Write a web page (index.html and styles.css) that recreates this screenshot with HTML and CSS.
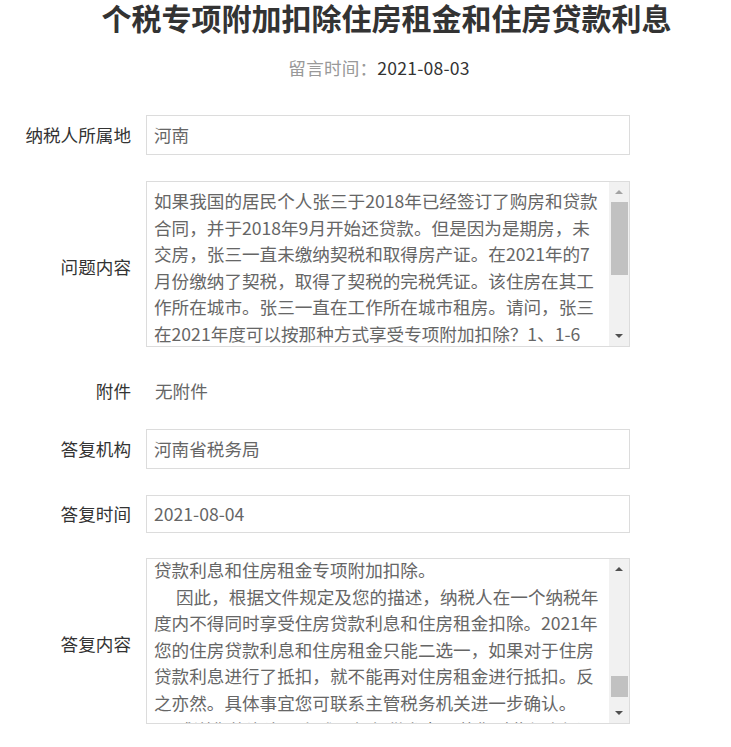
FILE: index.html
```html
<!DOCTYPE html>
<html lang="zh-CN">
<head>
<meta charset="utf-8">
<title>个税专项附加扣除住房租金和住房贷款利息</title>
<link rel="stylesheet" href="styles.css">
</head>
<body>
<div class="page">
  <h1 class="title">个税专项附加扣除住房租金和住房贷款利息</h1>
  <p class="meta"><span class="meta-label">留言时间：</span><span class="meta-value">2021-08-03</span></p>

  <div class="form">
    <div class="row">
      <div class="label">纳税人所属地</div>
      <div class="field input">河南</div>
    </div>

    <div class="row row-area">
      <div class="label label-area">问题内容</div>
      <div class="field area">
        <div class="area-text">如果我国的居民个人张三于2018年已经签订了购房和贷款<br>合同，并于2018年9月开始还贷款。但是因为是期房，未<br>交房，张三一直未缴纳契税和取得房产证。在2021年的7<br>月份缴纳了契税，取得了契税的完税凭证。该住房在其工<br>作所在城市。张三一直在工作所在城市租房。请问，张三<br>在2021年度可以按那种方式享受专项附加扣除？1、1-6<br>月份享受住房租金专项附加扣除，7-12月份享受住房贷款</div>
        <div class="scrollbar">
          <div class="sb-btn"><span class="arrow arrow-up arrow-disabled"></span></div>
          <div class="sb-track"><div class="sb-thumb" style="margin-top:0px;height:73px"></div></div>
          <div class="sb-btn"><span class="arrow arrow-down"></span></div>
        </div>
      </div>
    </div>

    <div class="row row-plain">
      <div class="label">附件</div>
      <div class="plain-value">无附件</div>
    </div>

    <div class="row">
      <div class="label">答复机构</div>
      <div class="field input">河南省税务局</div>
    </div>

    <div class="row">
      <div class="label">答复时间</div>
      <div class="field input input-compact">2021-08-04</div>
    </div>

    <div class="row row-area row-tight">
      <div class="label label-area">答复内容</div>
      <div class="field area">
        <div class="area-text area-scrolled">贷款利息和住房租金专项附加扣除。<br><span class="indent"></span>因此，根据文件规定及您的描述，纳税人在一个纳税年<br>度内不得同时享受住房贷款利息和住房租金扣除。2021年<br>您的住房贷款利息和住房租金只能二选一，如果对于住房<br>贷款利息进行了抵扣，就不能再对住房租金进行抵扣。反<br>之亦然。具体事宜您可联系主管税务机关进一步确认。<br><span class="indent"></span>感谢您的咨询！上述回复仅供参考。若您对此仍有疑</div>
        <div class="scrollbar">
          <div class="sb-btn"><span class="arrow arrow-up"></span></div>
          <div class="sb-track"><div class="sb-thumb" style="margin-top:97px;height:21px"></div></div>
          <div class="sb-btn"><span class="arrow arrow-down"></span></div>
        </div>
      </div>
    </div>
  </div>
</div>
</body>
</html>
```

FILE: styles.css
```css
html, body {
  margin: 0;
  padding: 0;
  background: #ffffff;
}

body {
  font-family: "Noto Sans CJK SC", "Microsoft YaHei", "Noto Sans", sans-serif;
  color: #333333;
  font-size: 17.6px;
}

.page {
  width: 731px;
  overflow: hidden;
}

.title {
  margin: 0;
  padding-left: 42px;
  text-align: center;
  font-size: 30px;
  line-height: 34px;
  font-weight: 700;
  color: #333333;
  white-space: nowrap;
}

.meta {
  margin: 21px 0 0 0;
  padding-left: 27px;
  text-align: center;
  font-size: 17.6px;
  line-height: 26px;
  letter-spacing: 0.2px;
}

.meta-label {
  color: #999999;
}

.meta-value {
  color: #333333;
}

.form {
  margin-top: 34px;
  display: flex;
  flex-direction: column;
  gap: 26px;
}

.row {
  display: flex;
  align-items: center;
  gap: 15px;
}

.row-tight {
  margin-top: -1px;
}

.label {
  width: 131px;
  flex: none;
  text-align: right;
  color: #333333;
  line-height: 26px;
  white-space: nowrap;
}

.label-area {
  padding-top: 6px;
}

.field {
  width: 484px;
  box-sizing: border-box;
  border: 1px solid #dcdcdc;
  color: #666666;
  background: #ffffff;
}

.input {
  height: 40px;
  line-height: 38px;
  padding: 0 7px;
  white-space: nowrap;
}

.input-compact {
  height: 38px;
  line-height: 36px;
}

.area {
  height: 166px;
  display: flex;
}

.area-text {
  flex: 1;
  overflow: hidden;
  padding: 6px 0 0 7px;
  line-height: 26.6px;
  white-space: nowrap;
}

.area-scrolled {
  padding-top: 0;
  margin-top: -2px;
}

.indent {
  display: inline-block;
  width: 22px;
}

.scrollbar {
  width: 20px;
  flex: none;
  background: #f1f1f1;
  display: flex;
  flex-direction: column;
}

.sb-btn {
  height: 20px;
  flex: none;
  display: flex;
  align-items: center;
  justify-content: center;
}

.sb-track {
  flex: 1;
  display: flex;
  flex-direction: column;
}

.sb-thumb {
  margin-left: 2px;
  width: 17px;
  background: #c1c1c1;
}

.arrow {
  width: 0;
  height: 0;
  border-left: 4px solid transparent;
  border-right: 4px solid transparent;
}

.arrow-up {
  border-bottom: 4px solid #505050;
}

.arrow-down {
  border-top: 4px solid #505050;
}

.arrow-up.arrow-disabled {
  border-bottom-color: #a3a3a3;
}

.row-plain {
  height: 30px;
  align-items: flex-start;
}

.row-plain .label,
.row-plain .plain-value {
  padding-top: 5px;
}

.plain-value {
  padding-left: 9px;
  color: #666666;
  line-height: 26px;
}
```
